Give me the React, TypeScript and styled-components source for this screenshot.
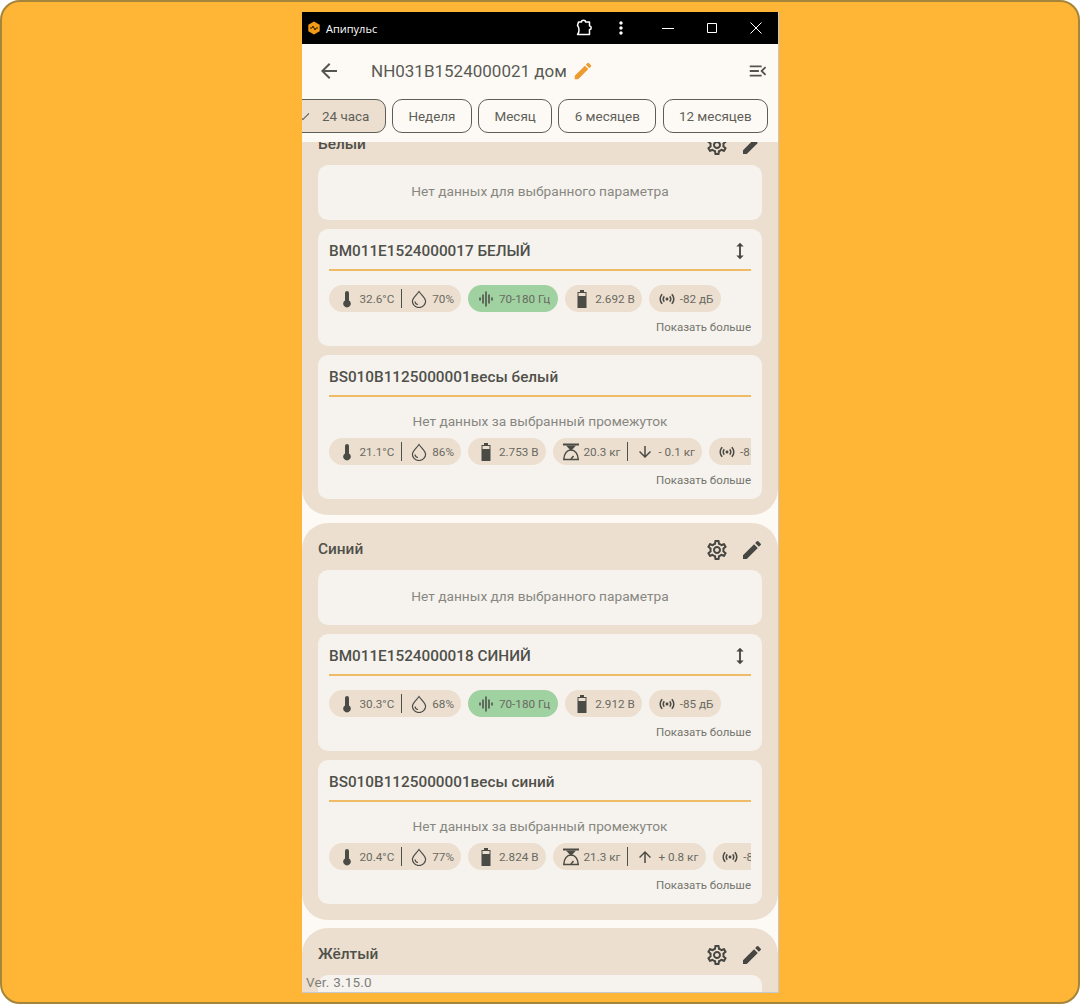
import React from "react";
import styled, { createGlobalStyle } from "styled-components";
import {
  MdArrowBack, MdArrowDownward, MdArrowUpward, MdEdit,
  MdGraphicEq, MdHeight, MdMoreVert, MdOutlineMenuOpen, MdOutlineSensors,
  MdOutlineSettings, MdCheck,
} from "react-icons/md";

const Global = createGlobalStyle`
  html, body { margin: 0; padding: 0; background: #fff; }
  * { box-sizing: border-box; }
  body { font-family: Roboto, "Noto Sans", sans-serif; }
`;

const Page = styled.div`
  width: 1080px; height: 1004px; background: #ffb536;
  border: 2px solid #a5853a; border-radius: 20px;
  display: flex; justify-content: center; padding-top: 10px;
`;
const Win = styled.div`
  position: relative; width: 477px; height: 981px; margin-left: 1px; background: #fdfaf6;
  border: 1px solid #c3c8d2; border-top: none; border-left: none; display: flex; flex-direction: column; overflow: hidden;
`;
const TitleBar = styled.div`
  height: 32px; flex: none; background: #000; color: #fff; display: flex; align-items: center;
  padding-left: 5px; font: 400 11px "Open Sans", sans-serif;
`;
const AppName = styled.span` flex: 1; margin-left: 5px; `;
const BarIcon = styled.span<{ $w: number }>`
  width: ${p => p.$w}px; display: flex; justify-content: center; align-items: center; color: #fff; flex: none;
`;
const Header = styled.div`
  height: 55px; flex: none; display: flex; align-items: center; padding: 0 9px 2px 15px; color: #555550;
`;
const HeadTitle = styled.div`
  margin-left: 30px; flex: 1; display: flex; align-items: center; gap: 5px;
  font-size: 17px; color: #5a5a55;
`;
const Tabs = styled.div`
  height: 43px; flex: none; display: flex; gap: 6.5px; margin-left: -19px; align-items: flex-start;
`;
const Tab = styled.div<{ $active?: boolean }>`
  height: 34px; border: 1.5px solid #5c5c58; border-radius: 10px; display: flex; align-items: center;
  padding: 0 15.25px 0 ${p => (p.$active ? 14 : 15.25)}px; gap: 11px; font-size: 13.45px; color: #5f5f58; flex: none;
  background: ${p => (p.$active ? "#ecdfcf" : "#fdfaf6")};
`;
const Scroll = styled.div`
  flex: 1; min-height: 0; overflow: hidden; display: flex; flex-direction: column; gap: 8px;
`;
const Group = styled.section`
  flex: none; background: #ecdfcf; border-radius: 26px; padding: 0 16px 16px;
  display: flex; flex-direction: column; gap: 9px;
  &:first-child { margin-top: -24px; }
`;
const GroupHead = styled.div`
  height: 47px; margin-bottom: -9px; padding-top: 6px; display: flex; align-items: center; justify-content: space-between;
`;
const GroupName = styled.div` font-size: 15.4px; font-weight: 500; color: #50504a; padding-bottom: 2px; `;
const GroupIcons = styled.div` display: flex; gap: 11px; color: #464642; margin-right: -2px; `;
const Card = styled.div`
  background: #f6f3ef; border-radius: 10px; padding: 0 11px;
`;
const Empty = styled(Card)`
  height: 55px; padding-bottom: 3px; display: flex; align-items: center; justify-content: center; font-size: 13.7px; color: #87877f;
`;
const CardHead = styled.div`
  height: 42px; border-bottom: 2px solid #efbb66; display: flex; align-items: center; justify-content: space-between;
  font-size: 15.3px; font-weight: 500; color: #50504a; padding-top: 4px;
`;
const NoData = styled.div`
  height: 41px; padding-top: 6px; display: flex; align-items: center; justify-content: center; font-size: 13.7px; color: #87877f;
`;
const Chips = styled.div<{ $top: number }>`
  display: flex; gap: 7px; overflow: hidden; padding-top: ${p => p.$top}px;
`;
const Chip = styled.div<{ $green?: boolean }>`
  height: 27px; flex: none; border-radius: 14px; display: flex; align-items: center; padding: 0 7.5px 0 8.5px; gap: 4px;
  font-size: 11.7px; color: #6a6a62; background: ${p => (p.$green ? "#a0d1a0" : "#ecdfcf")};
`;
const Divider = styled.span`
  width: 1px; height: 19px; background: #4f4f4a; margin: 0 4px 0 3px;
`;
const More = styled.div`
  height: 30px; display: flex; align-items: center; justify-content: flex-end; font-size: 11.5px; color: #74746c;
`;
const CardEnd = styled.div` height: 4px; `;
const Version = styled.div`
  position: absolute; left: 4px; bottom: 2px; font-size: 13.5px; color: #7f7f78; letter-spacing: 0.2px;
`;

const Thermo = () => (
  <svg width="18" height="18" viewBox="0 0 18 18" fill="#4b4b46">
    <path d="M7 3a2 2 0 0 1 4 0v7.400a3.800 3.800 0 1 1-4 0z" />
  </svg>
);
const Drop = () => (
  <svg width="18" height="18" viewBox="0 0 18 18" fill="none" stroke="#4b4b46" strokeWidth="1.2">
    <path d="M9 1.500C11 4.500 15.600 7.800 15.600 11.300a6.600 6.200 0 0 1-13.200 0C2.400 7.800 7 4.500 9 1.500z" />
    <path d="M5 11.500c.2 1.700 1.400 2.800 3 3" />
  </svg>
);
const Scale = () => (
  <svg width="18" height="18" viewBox="0 0 18 18" fill="none" stroke="#4b4b46" strokeWidth="1.5">
    <path d="M1 1.500h16" strokeWidth="2" />
    <path d="M4 2.500h10L9 8z" fill="#4b4b46" stroke="none" />
    <path d="M9 7C4.800 7 2 11 1.800 16.400h14.400C16 11 13.200 7 9 7z" />
    <path d="M9 16l2.500-3" />
  </svg>
);
const Battery = () => (
  <svg width="18" height="18" viewBox="0 0 18 18" fill="#4b4b46">
    <path d="M7 0h4v2h-4z" />
    <path d="M4.500 2h9v16h-9zM5.500 3v3h7v-3z" fillRule="evenodd" />
  </svg>
);
const Puzzle = () => (
  <svg width="18" height="18" viewBox="0 0 18 18" fill="none" stroke="#fff" strokeWidth="1.500" strokeLinejoin="round">
    <path d="M3.500 3H6.500C6.500 .8 10.500 .8 10.500 3H14.500V7C16.800 7 16.800 10.500 14.500 10.500V15.500H2.500C4.500 13.500 4.500 8.500 2.500 6.500L3.500 3z" />
  </svg>
);
const Minimize = () => (
  <svg width="12" height="12" viewBox="0 0 12 12" stroke="#fff"><path d="M0 6.500h12" /></svg>
);
const Maximize = () => (
  <svg width="12" height="12" viewBox="0 0 12 12" fill="none" stroke="#fff"><path d="M1.500 1.500h9v9h-9z" /></svg>
);
const CloseX = () => (
  <svg width="12" height="12" viewBox="0 0 12 12" stroke="#fff"><path d="M.5.500l11 11M11.500.500l-11 11" /></svg>
);
const Logo = () => (
  <svg width="14" height="14" viewBox="0 0 14 14">
    <path d="M7 .5l5.700 3.200v6.600L7 13.500l-5.700-3.200V3.700z" fill="#f39a17" />
    <path d="M3 7h2l1-2 2 4 1-2h2" fill="none" stroke="#2a1a00" strokeWidth="1" />
  </svg>
);

type Seg = { icon: React.ReactNode; text: string };
const icon = {
  t: <Thermo />, d: <Drop />, w: <MdGraphicEq size={18} color="#4b4b46" />, b: <Battery />,
  s: <MdOutlineSensors size={18} color="#4b4b46" />, k: <Scale />,
};

const ChipView: React.FC<{ segs: Seg[]; green?: boolean }> = ({ segs, green }) => (
  <Chip $green={green}>
    {segs.map((s, i) => (
      <React.Fragment key={i}>
        {i > 0 && <Divider />}
        {s.icon}
        <span>{s.text}</span>
      </React.Fragment>
    ))}
  </Chip>
);

const GroupIconsView = () => (
  <GroupIcons>
    <MdOutlineSettings size={24} />
    <MdEdit size={24} />
  </GroupIcons>
);

const hives = [
  { name: "Белый", bm: "BM011E1524000017 БЕЛЫЙ", t: "32.6°C", h: "70%", v: "2.692 В", db: "-82 дБ",
    bs: "BS010B1125000001весы белый", t2: "21.1°C", h2: "86%", v2: "2.753 В", kg: "20.3 кг", delta: "- 0.1 кг", up: false },
  { name: "Синий", bm: "BM011E1524000018 СИНИЙ", t: "30.3°C", h: "68%", v: "2.912 В", db: "-85 дБ",
    bs: "BS010B1125000001весы синий", t2: "20.4°C", h2: "77%", v2: "2.824 В", kg: "21.3 кг", delta: "+ 0.8 кг", up: true },
];

export default function App() {
  return (
    <Page>
      <Global />
      <Win>
        <TitleBar>
          <Logo />
          <AppName>Апипульс</AppName>
          <BarIcon $w={24}><Puzzle /></BarIcon>
          <BarIcon $w={50}><MdMoreVert size={20} /></BarIcon>
          <BarIcon $w={44}><Minimize /></BarIcon>
          <BarIcon $w={44}><Maximize /></BarIcon>
          <BarIcon $w={44}><CloseX /></BarIcon>
        </TitleBar>
        <Header>
          <MdArrowBack size={24} />
          <HeadTitle>NH031B1524000021 дом <MdEdit size={22} color="#ec9b2e" /></HeadTitle>
          <MdOutlineMenuOpen size={22} />
        </Header>
        <Tabs>
          <Tab $active><MdCheck size={13} />24 часа</Tab>
          <Tab>Неделя</Tab>
          <Tab>Месяц</Tab>
          <Tab>6 месяцев</Tab>
          <Tab>12 месяцев</Tab>
        </Tabs>
        <Scroll>
          {hives.map(h => (
            <Group key={h.name}>
              <GroupHead>
                <GroupName>{h.name}</GroupName>
                <GroupIconsView />
              </GroupHead>
              <Empty>Нет данных для выбранного параметра</Empty>
              <Card>
                <CardHead>{h.bm}<MdHeight size={22} color="#464642" /></CardHead>
                <Chips $top={14}>
                  <ChipView segs={[{ icon: icon.t, text: h.t }, { icon: icon.d, text: h.h }]} />
                  <ChipView green segs={[{ icon: icon.w, text: "70-180 Гц" }]} />
                  <ChipView segs={[{ icon: icon.b, text: h.v }]} />
                  <ChipView segs={[{ icon: icon.s, text: h.db }]} />
                </Chips>
                <More>Показать больше</More>
                <CardEnd />
              </Card>
              <Card>
                <CardHead>{h.bs}</CardHead>
                <NoData>Нет данных за выбранный промежуток</NoData>
                <Chips $top={0}>
                  <ChipView segs={[{ icon: icon.t, text: h.t2 }, { icon: icon.d, text: h.h2 }]} />
                  <ChipView segs={[{ icon: icon.b, text: h.v2 }]} />
                  <ChipView segs={[
                    { icon: icon.k, text: h.kg },
                    { icon: h.up ? <MdArrowUpward size={18} color="#4b4b46" /> : <MdArrowDownward size={18} color="#4b4b46" />, text: h.delta },
                  ]} />
                  <ChipView segs={[{ icon: icon.s, text: "-85 дБ" }]} />
                </Chips>
                <More>Показать больше</More>
                <CardEnd />
              </Card>
            </Group>
          ))}
          <Group>
            <GroupHead>
              <GroupName>Жёлтый</GroupName>
              <GroupIconsView />
            </GroupHead>
            <Empty>Нет данных для выбранного параметра</Empty>
          </Group>
        </Scroll>
        <Version>Ver. 3.15.0</Version>
      </Win>
    </Page>
  );
}
